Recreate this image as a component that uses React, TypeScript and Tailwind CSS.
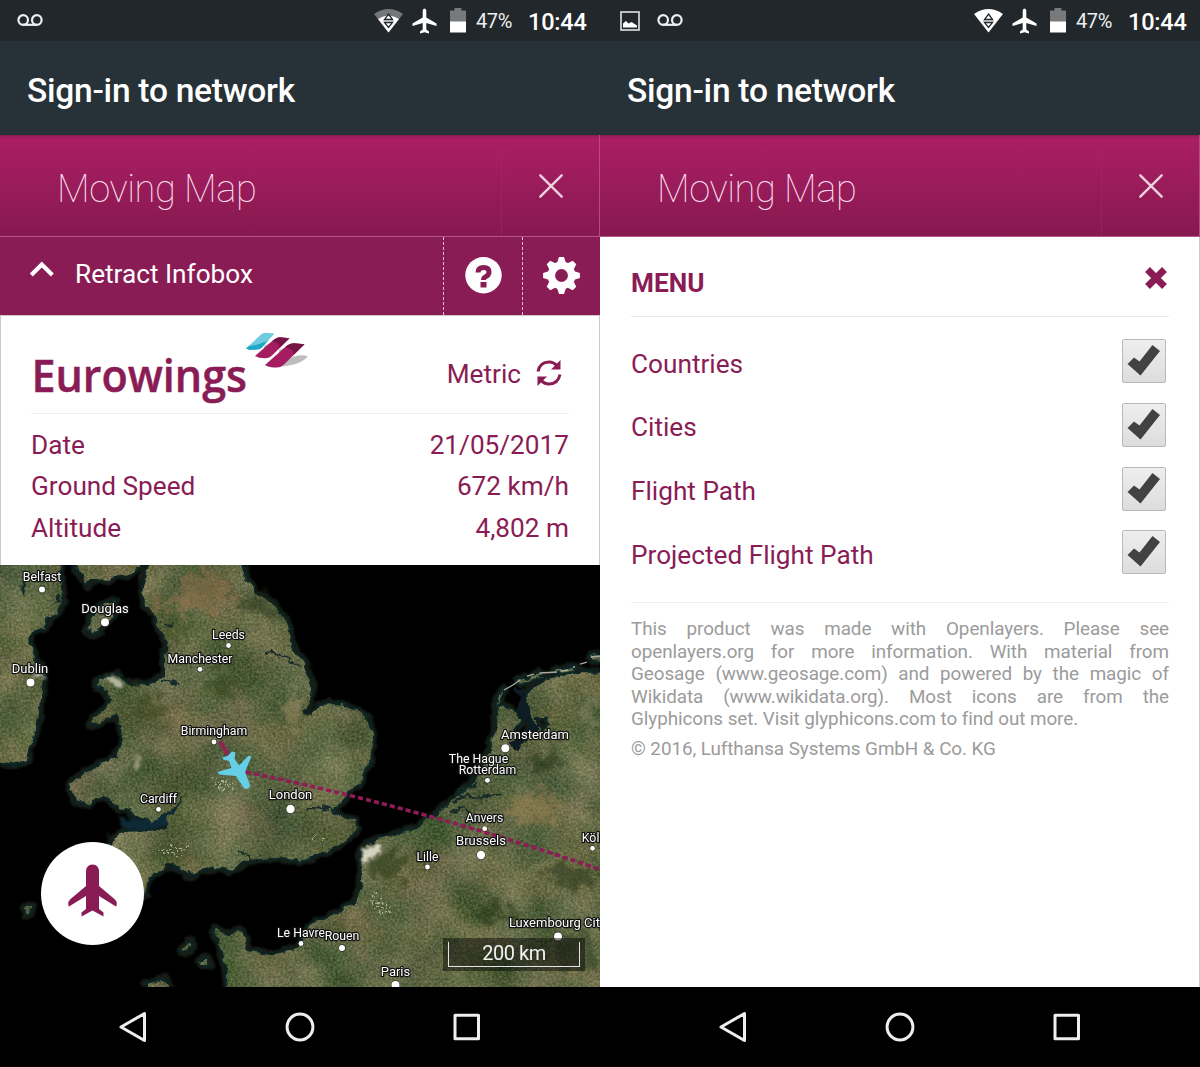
import type { ReactNode } from "react";

type City = { name: string; x: number; y: number; dx: number; dy: number; r: number; size: number };

const cities: City[] = [
  { name: "Belfast", x: 42, y: 581, dx: 42, dy: 589.5, r: 3, size: 12.3 },
  { name: "Douglas", x: 105, y: 613, dx: 105, dy: 622.3, r: 4, size: 13 },
  { name: "Leeds", x: 228.5, y: 638.5, dx: 228.5, dy: 645.5, r: 2.4, size: 12.3 },
  { name: "Manchester", x: 200, y: 662.5, dx: 200, dy: 669.3, r: 2.4, size: 12.3 },
  { name: "Dublin", x: 30, y: 672.5, dx: 30.5, dy: 682.5, r: 4, size: 13 },
  { name: "Birmingham", x: 214, y: 735, dx: 214, dy: 742, r: 2.4, size: 12.3 },
  { name: "London", x: 290.5, y: 799, dx: 290.5, dy: 809, r: 4.2, size: 13 },
  { name: "Cardiff", x: 158.5, y: 802.5, dx: 158.5, dy: 809.3, r: 2.4, size: 12.3 },
  { name: "Amsterdam", x: 535, y: 738.5, dx: 505.3, dy: 748.3, r: 4, size: 13 },
  { name: "The Hague", x: 478.5, y: 763, dx: 487, dy: 780.3, r: 2.4, size: 12.3 },
  { name: "Rotterdam", x: 487.5, y: 774, dx: 487.5, dy: 780.3, r: 2.4, size: 12.3 },
  { name: "Anvers", x: 484.5, y: 822, dx: 484.7, dy: 828.7, r: 2.4, size: 12.3 },
  { name: "Brussels", x: 481, y: 845, dx: 481, dy: 855, r: 4.2, size: 13 },
  { name: "Lille", x: 427.5, y: 860.5, dx: 427.5, dy: 867, r: 2.4, size: 12.3 },
  { name: "Köln", x: 594, y: 842, dx: 592.5, dy: 848.3, r: 2.4, size: 12.3 },
  { name: "Luxembourg City", x: 557.5, y: 927, dx: 558, dy: 936.5, r: 4, size: 13 },
  { name: "Le Havre", x: 301, y: 937, dx: 301, dy: 943.5, r: 2.4, size: 12.3 },
  { name: "Rouen", x: 342, y: 939.5, dx: 342, dy: 948, r: 3, size: 12.3 },
  { name: "Paris", x: 395.5, y: 975.5, dx: 395.5, dy: 985, r: 4, size: 13 },
];

const land =
  "M-10 555H59L60 575L62 600L58 612L46 620L42 628L32 632L28 640L32 652L40 665L43 680L40 700L38 720L32 742L26 760L14 764L-10 762Z" +
  "M72 555L80 572L86 586L92 578L108 581L116 576L130 573L150 560V555Z" +
  "M115 601L112 615L101 629L91 634L88 627L97 610Z" +
  "M153 555L145 580L142 592L147 606L155 616L160 630L168 642L165 656L165 676L158 679L146 687L128 684L118 677L108 676L99 681L99 686L107 691L112 701L105 710L92 718L91 724L101 723L116 712L121 725L122 745L117 757L95 768L80 778L69 784L76 800L88 803L97 797L112 800L118 808L130 810L140 819L158 821L169 811L186 795L180 804L170 815L165 828L150 831L122 832L114 838L112 846L85 870L60 895L70 905L100 900L130 905L145 893L148 878L165 865L180 866L190 875L197 872L215 866L235 870L245 860L260 859L285 857L300 861L310 857L320 853L335 847L349 838L357 829L355 819L340 818L331 812L340 803L350 791L362 775L369 762L372 736L367 720L357 710L340 705L320 706L312 716L302 711L309 700L311 688L305 668L298 656L290 640L288 625L275 605L255 593L243 575L240 555Z" +
  "M610 672L590 673L570 673L545 680L530 691L527 705L533 720L528 735L518 745L514 731L521 722L514 712L504 705L497 711L496 730L490 750L478 776L465 790L452 800L442 812L428 820L410 831L385 839L366 845L360 857L362 870L360 892L357 901L340 912L320 920L307 930L303 945L290 950L270 955L250 952L245 943L242 931L230 935L214 930L218 945L225 957L229 995H610Z" +
  "M503 695L504 690L499 697L496 707ZM517 681L540 674L542 676L520 683ZM554 671L575 667L577 669L556 673ZM590 657L610 655V658L592 660Z" +
  "M535 717L547 717L550 725L543 731L535 727Z" +
  "M182 950L190 942L192 945L186 951ZM200 960L209 960L209 965L202 965ZM26 908L31 908L30 914L27 914ZM147 985L165 980L172 990H147Z";

function Satellite() {
  return (
    <svg className="block h-full w-full" viewBox="0 565 600 422" fontFamily="Roboto, sans-serif">
      <defs>
        <filter id="terrain" x="0" y="565" width="600" height="422" filterUnits="userSpaceOnUse" colorInterpolationFilters="sRGB">
          <feTurbulence type="fractalNoise" baseFrequency="0.09" numOctaves="3" seed="4" result="edge" />
          <feDisplacementMap in="SourceGraphic" in2="edge" scale="9" xChannelSelector="R" yChannelSelector="G" result="shape" />
          <feTurbulence type="fractalNoise" baseFrequency="0.02" numOctaves="5" seed="11" />
          <feColorMatrix values="0.36 0 0.12 0 0.13  0.2 0.06 0.12 0 0.21  0.2 0 0.14 0 0.09  0 0 0 0 1" result="broad" />
          <feTurbulence type="fractalNoise" baseFrequency="0.42" numOctaves="3" seed="8" />
          <feColorMatrix values="0.8 0 0 0 0.1  0.8 0 0 0 0.1  0.8 0 0 0 0.1  0 0 0 0 1" result="fine" />
          <feComposite in="broad" in2="fine" operator="arithmetic" k1="0" k2="1" k3="0.36" k4="-0.18" />
          <feComposite in2="shape" operator="in" />
        </filter>
        <filter id="shore" x="0" y="565" width="600" height="422" filterUnits="userSpaceOnUse">
          <feTurbulence type="fractalNoise" baseFrequency="0.09" numOctaves="3" seed="4" result="edge" />
          <feDisplacementMap in="SourceGraphic" in2="edge" scale="9" xChannelSelector="R" yChannelSelector="G" />
          <feGaussianBlur stdDeviation="1.1" />
        </filter>
        <filter id="river" x="0" y="565" width="600" height="422" filterUnits="userSpaceOnUse">
          <feTurbulence type="fractalNoise" baseFrequency="0.12" numOctaves="3" seed="6" result="edge" />
          <feDisplacementMap in="SourceGraphic" in2="edge" scale="10" xChannelSelector="R" yChannelSelector="G" />
          <feGaussianBlur stdDeviation="0.4" />
        </filter>
        <filter id="patch" x="0" y="565" width="600" height="422" filterUnits="userSpaceOnUse">
          <feTurbulence type="fractalNoise" baseFrequency="0.1" numOctaves="4" seed="2" result="n" />
          <feDisplacementMap in="SourceGraphic" in2="n" scale="40" xChannelSelector="R" yChannelSelector="G" />
          <feGaussianBlur stdDeviation="1.8" />
        </filter>
        <filter id="bright" x="0" y="565" width="600" height="422" filterUnits="userSpaceOnUse">
          <feTurbulence type="fractalNoise" baseFrequency="0.25" numOctaves="3" seed="2" result="n" />
          <feDisplacementMap in="SourceGraphic" in2="n" scale="10" xChannelSelector="R" yChannelSelector="G" />
          <feGaussianBlur stdDeviation="0.9" />
        </filter>
      </defs>
      <rect y="565" width="600" height="422" fill="#000" />
      <g filter="url(#shore)">
        <path d={land} fill="#0c1b1a" stroke="#121a12" strokeWidth="11" strokeLinejoin="round" />
        <path d={land} fill="none" stroke="#102628" strokeWidth="4" strokeLinejoin="round" />
        <path d="M120 821L140 826L166 820L178 803" fill="none" stroke="#102c35" strokeWidth="9" />
      </g>
      <path d={land} fill="#fff" filter="url(#terrain)" />
      <g filter="url(#patch)">
        <ellipse cx="205" cy="590" rx="24" ry="20" fill="#96714b" opacity=".5" />
        <ellipse cx="172" cy="603" rx="18" ry="9" fill="#96714b" opacity=".5" />
        <ellipse cx="180" cy="628" rx="14" ry="12" fill="#3c4d20" opacity=".5" />
        <ellipse cx="258" cy="605" rx="16" ry="10" fill="#222c16" opacity=".45" />
        <ellipse cx="222" cy="685" rx="10" ry="17" fill="#2e3d1a" opacity=".45" />
        <ellipse cx="148" cy="705" rx="18" ry="12" fill="#36401d" opacity=".45" />
        <ellipse cx="292" cy="712" rx="8" ry="20" fill="#a08d68" opacity=".5" />
        <ellipse cx="388" cy="865" rx="20" ry="13" fill="#2b3d13" opacity=".55" />
        <ellipse cx="535" cy="808" rx="24" ry="16" fill="#a08055" opacity=".45" />
        <ellipse cx="492" cy="915" rx="24" ry="7" fill="#1e2f17" opacity=".5" />
        <ellipse cx="570" cy="875" rx="26" ry="12" fill="#1e2f17" opacity=".5" />
        <ellipse cx="545" cy="762" rx="15" ry="9" fill="#26341c" opacity=".5" />
        <ellipse cx="590" cy="715" rx="8" ry="22" fill="#8f8763" opacity=".4" />
        <ellipse cx="575" cy="950" rx="22" ry="24" fill="#1e2f17" opacity=".4" />
      </g>
      <g filter="url(#bright)" opacity=".85">
        <path d="M363 848L382 845L380 853L368 860L362 865Z" fill="#e8e6d8" />
        <path d="M104 677L114 677L124 685L120 688L112 682Z" fill="#c9c6b4" />
        <path d="M34 670L43 672L44 677L34 679Z" fill="#c8c8c2" />
        <path d="M136 755L141 757L138 772L134 770Z" fill="#a59b82" />
      </g>
      <g fill="none" stroke="#14292b" strokeWidth="2" strokeLinejoin="round" filter="url(#river)">
        <path d="M267 654L276 653L285 655L293 662L302 667M165 626L173 622M163 680L170 681L177 684M238 853L246 855L252 860" />
        <path d="M338 811L320 807L308 809" />
        <path d="M452 802L465 796L480 797L500 794M455 793L470 788L478 784M450 812L462 808L470 812" strokeWidth="2.6" />
        <path d="M57 593L58 603M25 580L22 594" strokeWidth="4" />
      </g>
      <path d="M515 690L523 692L522 708L528 720L534 727L525 735L516 745L512 748" fill="none" stroke="#0b1b20" strokeWidth="8" strokeLinejoin="round" filter="url(#river)" />
      <g fill="none" stroke="#c4c7b4" strokeWidth="1.300" strokeDasharray="1.500 2.500 1 3 2 2" filter="url(#river)">
        <path d="M214 782H230M216 785H234M220 789H236M213 777H220M158 851H185M164 855H182M172 847H192M372 898H383M370 903H388M373 908H390M376 914H391M374 893H382M314 839H324" />
      </g>
      <path d="M504 690L513 685L520 680M527 676L534 674M540 673L557 672M561 671L568 670M573 667L575 667M580 664L587 662M591 657L600 656" stroke="#a9aca0" strokeWidth="1.300" fill="none" />

      <path d="M220 741L228 755" stroke="#8f2454" strokeWidth="4" />
      <path d="M246 772Q430 810 604 871" fill="none" stroke="#8f1b58" strokeWidth="3.600" strokeDasharray="5.200 3" />
      <path
        d="M222.500 757.500L227.500 756L232 751.500L235.500 752.500L234.500 758.500L239 765.500L248.500 755.800L251.500 756.500L245 772L250 785Q249.500 789 246 789Q244 789 242.500 786L236 776L219 774.500L217.500 772L231.500 768L229 761L223 759.500Z"
        fill="#65cfe8"
      />

      {cities.map((c) => (
        <g key={c.name}>
          <circle cx={c.dx} cy={c.dy} r={c.r} fill="#fff" stroke="#222" strokeOpacity=".7" strokeWidth="1.3" paintOrder="stroke" />
          <text x={c.x} y={c.y} textAnchor="middle" fontSize={c.size} fill="#fff" stroke="#111" strokeWidth="2.4" strokeLinejoin="round" paintOrder="stroke">
            {c.name}
          </text>
        </g>
      ))}
    </svg>
  );
}

function Voicemail() {
  return (
    <svg className="h-[14px] w-[26px] -translate-y-px" viewBox="0 0 26 14" fill="none" stroke="#eceff1" strokeWidth="2.2">
      <circle cx="6.200" cy="7" r="4.800" />
      <circle cx="19.800" cy="7" r="4.800" />
      <path d="M6 11.800H20" />
    </svg>
  );
}

function StatusBar({ picture, dimWifi }: { picture?: boolean; dimWifi?: boolean }) {
  return (
    <div className="flex h-[41px] items-center bg-[#22272b] pr-[14px] pl-[17px] text-[#eceff1]">
      {picture && (
        <svg className="mr-[17px] ml-[3px] h-[20px] w-[20px]" viewBox="0 0 20 20">
          <rect x="1" y="1" width="18" height="18" fill="none" stroke="#d5d8da" strokeWidth="1.700" />
          <path d="M3 16.500V12.500L6 10L8.500 12.500L11.500 11L17 14.500V16.500Z" fill="#fff" />
        </svg>
      )}
      <Voicemail />
      <svg className="ml-auto h-[25px] w-[29px]" viewBox="0 0 29 25">
        <path d="M0 6Q14.500 -4 29 6L14.500 24.500Z" fill={dimWifi ? "#73777a" : "#fff"} />
        {dimWifi && <path d="M4 11Q14.500 4 25 11L14.500 24.500Z" fill="#fff" />}
        <path d="M14.500 6L18.500 11.500H10.500ZM10.500 14.500H18.500L14.500 19.500Z" fill="none" stroke="#22272b" strokeWidth="1.300" />
        <path d="M9.500 13H19.500" stroke="#9a9da0" strokeWidth="1" />
      </svg>
      <svg className="ml-[9px] h-[26px] w-[25px]" viewBox="0 0 25 26" fill="#fff">
        <path d="M12.500 .5Q14.300 .5 14.300 3V9.500L24.500 15.500V18L14.300 15V21.500L17 23.500V25.500L12.500 24.300L8 25.500V23.500L10.700 21.500V15L.5 18V15.500L10.700 9.500V3Q10.700 .5 12.500 .5Z" />
      </svg>
      <svg className="ml-[13px] h-[25px] w-[16px]" viewBox="0 0 16 25">
        <path d="M4.500 0H11.500V2.500H16V14H0V2.500H4.500Z" fill="#77797b" />
        <path d="M0 13.500H16V24.500H0Z" fill="#fff" />
      </svg>
      <span className="ml-[10px] w-[42px] text-[20px] leading-[41px] tracking-[-0.4px] whitespace-nowrap">
        <span className="relative top-px">47%</span>
      </span>
      <span className="ml-[10px] w-[58px] pt-[2px] text-[23.500px] leading-[42px] font-medium tracking-[-0.2px] whitespace-nowrap text-white">10:44</span>
    </div>
  );
}

function Phone({ children, picture, dimWifi }: { children: ReactNode; picture?: boolean; dimWifi?: boolean }) {
  return (
    <section className="flex h-[1067px] w-[600px] flex-col overflow-hidden">
      <StatusBar picture={picture} dimWifi={dimWifi} />
      <div className="flex h-[94px] items-center bg-[#273238] pt-[6px] pl-[27px] text-[33.500px] font-medium tracking-[-0.25px] text-white">
        <span className="whitespace-nowrap">Sign-in to network</span>
      </div>
      <header className="flex h-[102px] border-r border-b border-[#b9558a] border-r-[#b64a83] bg-linear-to-b from-[#ad1e66] to-[#86194f] shadow-[inset_0_4px_3px_-3px_#74204d]">
        <h1 className="flex-1 pt-[3px] pl-[57px] text-[38px] leading-[102px] font-thin tracking-[-0.4px] text-[#ffe3f1]">Moving Map</h1>
        <div className="mt-[14px] w-px bg-[#a82768]/50" />
        <div className="flex w-[97px] items-center justify-center">
          <svg className="h-[26px] w-[26px]" viewBox="0 0 26 26">
            <path d="M2.300 2.300L23.700 23.700M23.700 2.300L2.300 23.700" stroke="#ecd3df" strokeWidth="2.400" strokeLinecap="round" />
          </svg>
        </div>
      </header>
      <main className="h-[750px]">{children}</main>
      <nav className="flex h-[80px] items-center justify-around bg-black px-[50px]">
        <svg className="h-[34px] w-[34px]" viewBox="0 0 34 34" fill="none" stroke="#eee" strokeWidth="3" strokeLinejoin="round">
          <path d="M5 17L28.500 3.500V30.500Z" />
        </svg>
        <svg className="h-[34px] w-[34px]" viewBox="0 0 34 34" fill="none" stroke="#eee" strokeWidth="3">
          <circle cx="17" cy="17" r="12.900" />
        </svg>
        <svg className="h-[34px] w-[34px]" viewBox="0 0 34 34" fill="none" stroke="#eee" strokeWidth="3" strokeLinejoin="round">
          <rect x="5" y="5.200" width="23.500" height="23.500" />
        </svg>
      </nav>
    </section>
  );
}

function Logo() {
  return (
    <svg className="h-[76px] w-[280px]" viewBox="31 330 280 76">
      <text x="31.500" y="391.700" fontFamily="'Open Sans', 'Noto Sans', sans-serif" fontWeight="650" fontSize="44.500" textLength="215.500" lengthAdjust="spacingAndGlyphs" fill="#8a1c55" stroke="#8a1c55" strokeWidth=".5">
        Eurowings
      </text>
      <path d="M276 367L292 357Q302 354 308 356.500Q299 366 276 367ZM264 346L274 341L277 342L264 352ZM279 350L289 346L291 347L279 358Z" fill="#bdbdbd" />
      <path d="M246 348.500L261 334.500Q263 332.800 266 332.800L274.500 333.500L262 347.500Q260 349.500 257 349.500L250 350Z" fill="#6ecbe0" />
      <path d="M246 348.500L249 346Q256 346 268 340.500L262 347.500Q260 349.500 257 349.500L250 350Z" fill="#1fa6c9" />
      <path d="M255 356L274 339.500Q277 337.300 280 337.300L289.500 338.300L272 355.500Q269.500 358 266 358.300Q259 358.500 255 356Z" fill="#a51c61" />
      <path d="M265 365L287 345.500Q290 343.300 294 343.300L304.500 344.300L284 364.500Q281 367.300 277 367.600Q269 367.600 265 365Z" fill="#a51c61" />
      <path d="M272 341.500Q277 337.300 280 337.300L289.500 338.300L279 348.500Q281 342.500 272 341.500ZM285 347.500Q290 343.300 294 343.300L304.500 344.300L293 355.500Q296 349 285 347.500Z" fill="#751546" />
    </svg>
  );
}

const facts = [
  ["Date", "21/05/2017"],
  ["Ground Speed", "672 km/h"],
  ["Altitude", "4,802 m"],
];

function MapScreen() {
  return (
    <>
      <div className="flex h-[78px] bg-[#8a1c55] text-white">
        <svg className="mt-[24px] ml-[30px] h-[18px] w-[24px]" viewBox="0 0 24 18">
          <path d="M1.300 14L11.800 3.500L22.300 14" fill="none" stroke="#fff" strokeWidth="4.200" />
        </svg>
        <span className="ml-[21px] flex-1 text-[26.200px] leading-[74px] whitespace-nowrap">Retract Infobox</span>
        <div className="flex w-[79px] justify-center border-l border-dashed border-[#e2bfd1] pt-[20px] pl-px">
          <svg className="h-[37px] w-[37px]" viewBox="0 0 37 37">
            <circle cx="18.500" cy="18.200" r="18.200" fill="#fff" />
            <path d="M13 15.500Q13 10.500 18.500 10.500Q24 10.500 24 15Q24 18 21 19.500Q18.500 20.500 18.500 23" fill="none" stroke="#8a1c55" strokeWidth="5" />
            <path d="M15.500 25H21.500V30.500H15.500Z" fill="#8a1c55" />
          </svg>
        </div>
        <div className="flex w-[78px] justify-center border-l border-dashed border-[#e2bfd1] pt-[20px]">
          <svg className="h-[37px] w-[37px]" viewBox="-18.500 -18.500 37 37" fill="none" stroke="#fff">
            <circle r="10.200" strokeWidth="7.500" />
            <g fill="#fff" stroke="none">
              {[0, 45, 90, 135, 180, 225, 270, 315].map((a) => (
                <path key={a} transform={`rotate(${a})`} d="M-4.600 -12L-2.500 -18.400H2.500L4.600 -12Z" />
              ))}
            </g>
          </svg>
        </div>
      </div>
      <div className="h-[250px] border-x border-t border-[#c9c9c9] bg-white px-[30px] text-[26.200px] text-[#8a1c55]">
        <div className="flex h-[98px] items-start border-b border-[#eeeeee]">
          <div className="mt-[14px]"><Logo /></div>
          <span className="mt-[38px] ml-auto leading-[40px] whitespace-nowrap">Metric</span>
          <svg className="mt-[43px] mr-[6px] ml-[14px] h-[28px] w-[28px]" viewBox="0 0 28 28">
            <path d="M3 12.500Q5 3 14 3Q19 3 22 7M25 15.500Q23 25 14 25Q9 25 6 21" fill="none" stroke="#8a1c55" strokeWidth="3" />
            <path d="M25.500 1V10.500H16ZM2.500 27V17.500H12Z" fill="#8a1c55" />
          </svg>
        </div>
        <dl className="flex flex-col pt-[11px]">
          {facts.map(([label, value]) => (
            <div key={label} className="flex h-[41.300px] justify-between leading-[41px]">
              <dt>{label}</dt>
              <dd>{value}</dd>
            </div>
          ))}
        </dl>
      </div>
      <div className="relative h-[422px] overflow-hidden bg-black">
        <Satellite />
        <button className="absolute top-[277px] left-[41px] flex h-[103px] w-[103px] justify-center rounded-full bg-white pt-[21px]">
          <svg className="h-[56px] w-[50px]" viewBox="0 0 50 56" fill="#8a1c55">
            <path d="M18 9Q18 1.500 24.500 1.500T31 9V23L47 36.500Q50 40 48 43.500L31 33V46L35.500 49.500V53.500L24.500 47.500L13.500 53.500V49.500L18 46V33L1 43.500Q-1 40 2 36.500L18 23Z" />
          </svg>
        </button>
        <div className="absolute top-[373px] left-[443px] h-[33px] w-[142px] bg-black/45 px-[5px] pt-[4px]">
          <div className="h-[25px] border-x border-b border-[#e5e5e5] text-center text-[20px] leading-[23px] tracking-[-0.5px] text-[#f1f1f1]">200 km</div>
        </div>
      </div>
    </>
  );
}

const options = ["Countries", "Cities", "Flight Path", "Projected Flight Path"];

const credits = [
  "This product was made with Openlayers. Please see",
  "openlayers.org for more information. With material from",
  "Geosage (www.geosage.com) and powered by the magic of",
  "Wikidata (www.wikidata.org). Most icons are from the",
];

function MenuScreen() {
  return (
    <div className="h-[750px] border-r border-[#c9c9c9] bg-white px-[31px] pr-[30px]">
      <div className="flex h-[80px] justify-between border-b border-[#e8e8e8] text-[#8a1c55]">
        <h2 className="text-[26.200px] leading-[92px] font-bold">MENU</h2>
        <svg className="mt-[30px] mr-[2px] h-[22px] w-[22px]" viewBox="0 0 22 22">
          <path d="M2.500 2.500L19.500 19.500M19.500 2.500L2.500 19.500" stroke="#8a1c55" strokeWidth="6.800" />
        </svg>
      </div>
      <div className="h-[286px] border-b border-[#eeeeee] pt-[12.500px] text-[26.200px] text-[#8a1c55]">
        {options.map((label) => (
          <label key={label} className="flex h-[63.700px] items-center justify-between">
            <span className="pt-[6px]">{label}</span>
            <span className="mr-[3px] flex h-[44px] w-[44px] items-center justify-center rounded-[2px] border-[1.500px] border-[#bababa] bg-linear-to-b from-[#eeeeee] to-[#dddddd]">
              <svg className="h-[42px] w-[42px]" viewBox="0 0 42 42">
                <path d="M4.500 24L11 17.500L16.500 21.500L29.500 5L37 11L17.500 35.500Z" fill="#424242" />
              </svg>
            </span>
          </label>
        ))}
      </div>
      <p className="mt-[15px] text-[18.850px] leading-[22.500px] tracking-[-0.06px] text-[#9b9b9b]">
        {credits.map((line) => (
          <span key={line} className="block text-justify whitespace-nowrap [text-align-last:justify]">{line} </span>
        ))}
        <span className="block whitespace-nowrap">Glyphicons set. Visit glyphicons.com to find out more.</span>
      </p>
      <p className="mt-[7.500px] text-[18.850px] leading-[22.500px] tracking-[-0.06px] text-[#9b9b9b]">© 2016, Lufthansa Systems GmbH &amp; Co. KG</p>
    </div>
  );
}

export default function App() {
  return (
    <div className="flex h-[1067px] w-[1200px] overflow-hidden bg-black font-[Roboto,sans-serif]">
      <Phone dimWifi>
        <MapScreen />
      </Phone>
      <Phone picture>
        <MenuScreen />
      </Phone>
    </div>
  );
}
